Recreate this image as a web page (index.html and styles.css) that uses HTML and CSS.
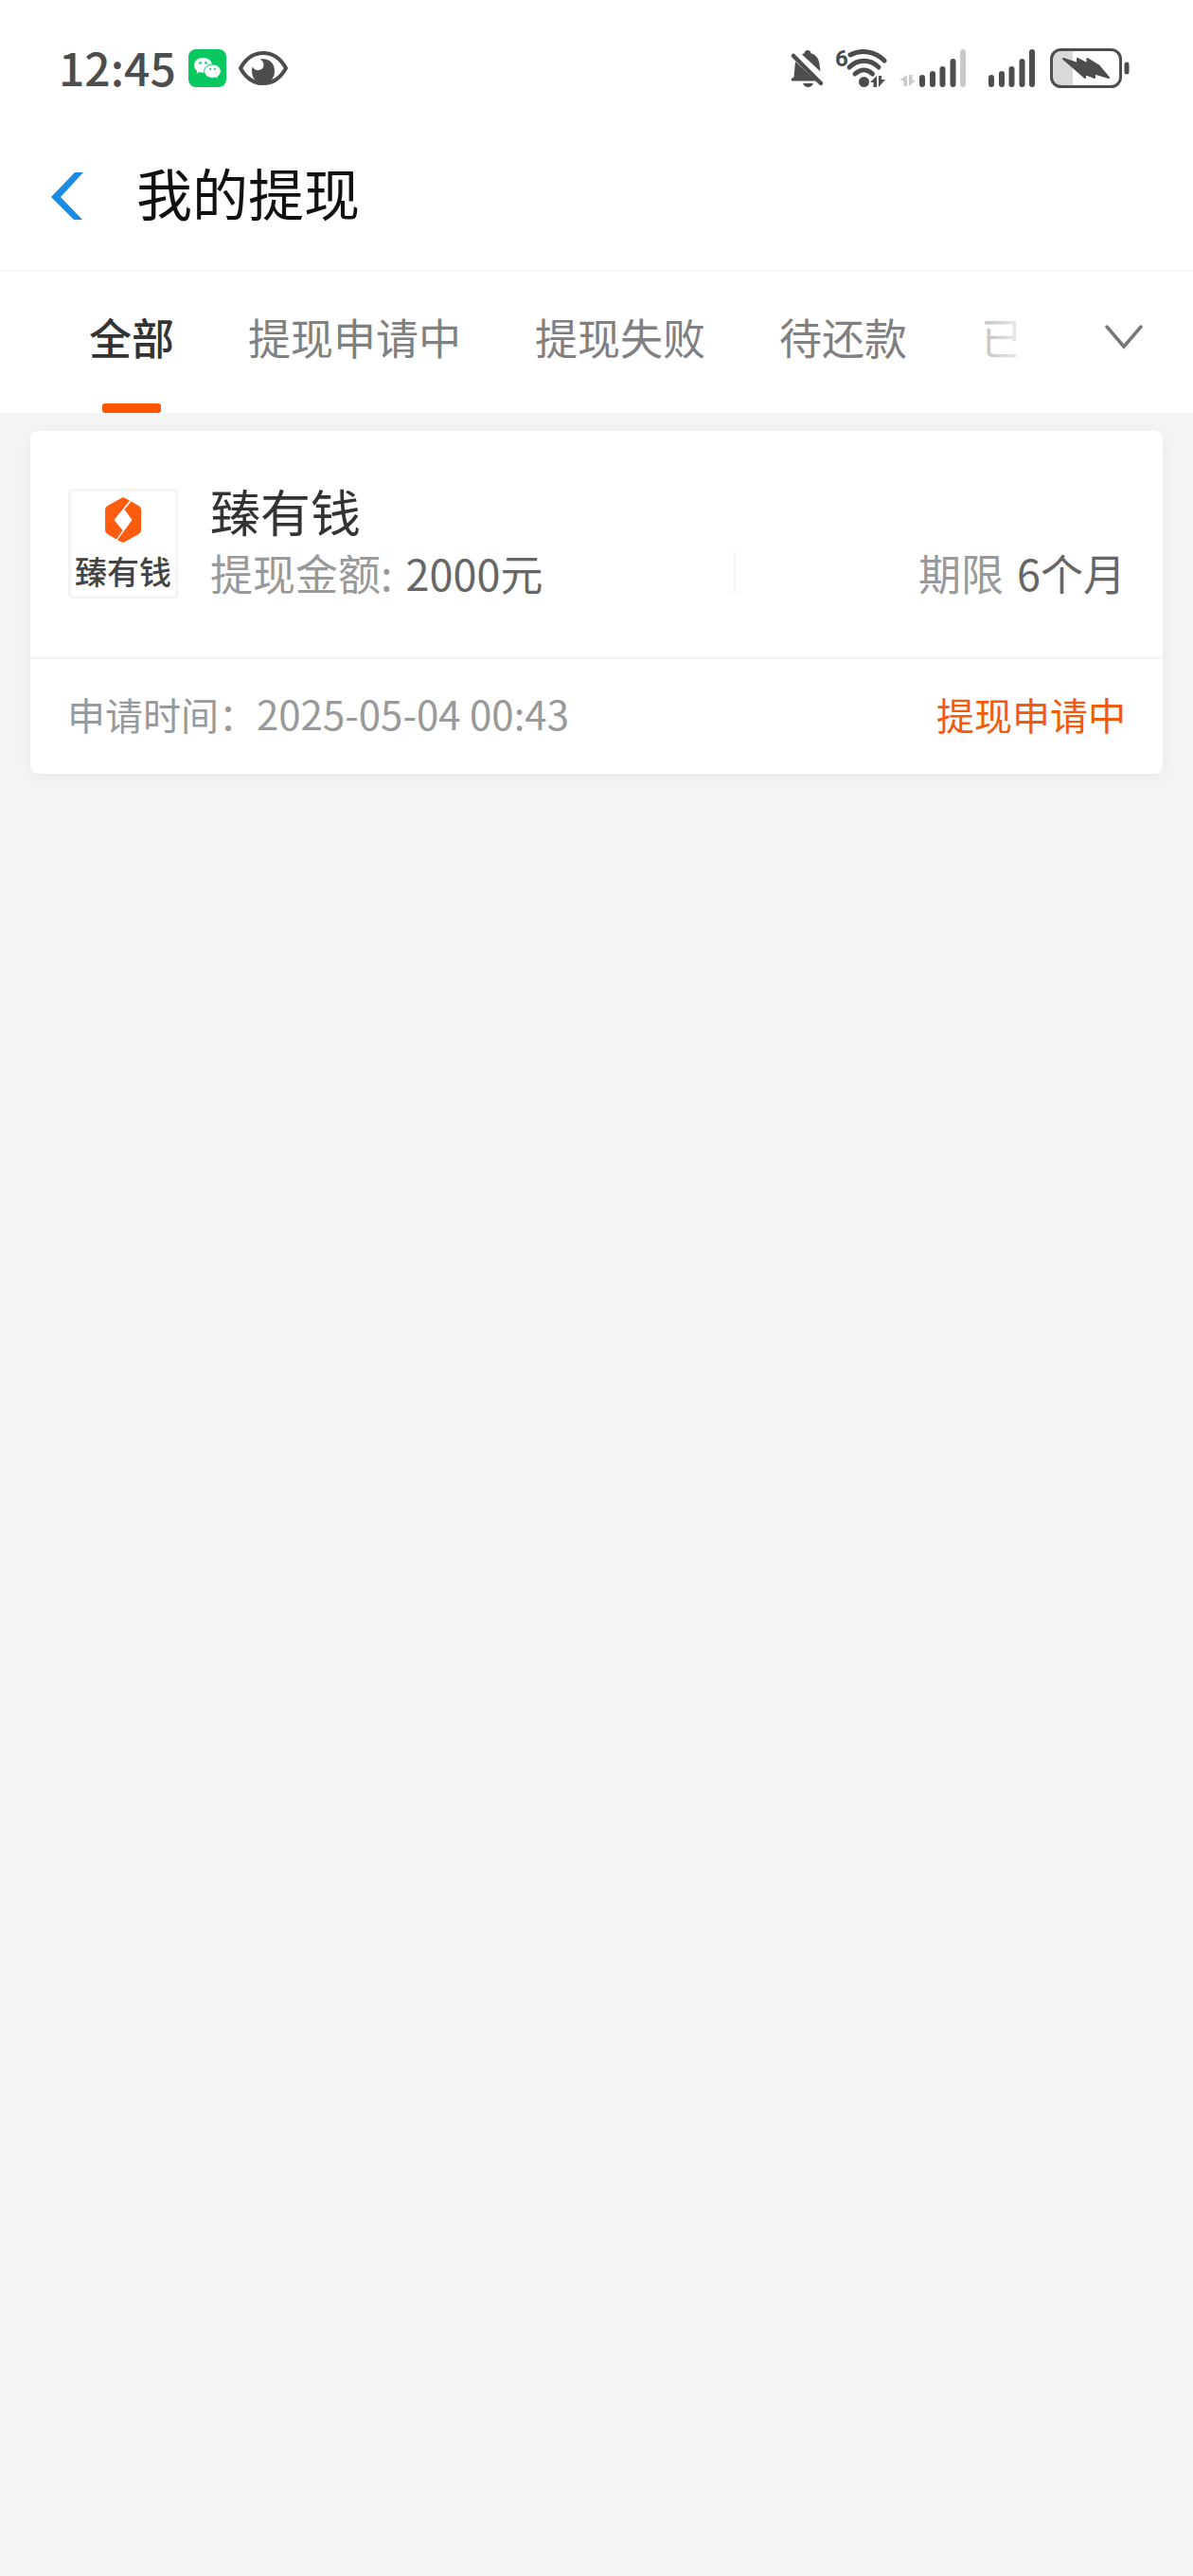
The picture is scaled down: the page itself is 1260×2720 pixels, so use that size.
FILE: index.html
```
<!DOCTYPE html>
<html lang="zh-CN">
<head>
    <meta charset="UTF-8">
    <meta name="viewport" content="width=device-width, initial-scale=1.0">
    <title>我的提现</title>
    <link rel="stylesheet" href="styles.css">
</head>
<body>
    <div class="status-bar">
        <div class="status-left">
            <span class="clock">12:45</span>
            <svg width="40" height="40" viewBox="0 0 40 40">
                <rect width="40" height="40" rx="8" fill="#07c95f"/>
                <path d="M15.500 9C10 9 6 12.500 6 17c0 2.500 1.200 4.500 3.300 6l-.8 2.800 3.300-1.700c1.200.4 2.400.6 3.700.6C21 24.700 25 21.500 25 17S21 9 15.500 9z" fill="#fff"/>
                <path d="M25.500 16c-5 0-8.800 3.200-8.800 7.200s3.800 7.200 8.800 7.200c1.100 0 2.200-.2 3.200-.5l2.800 1.500-.7-2.500c2.200-1.400 3.500-3.400 3.500-5.700 0-4-3.800-7.200-8.800-7.200z" fill="#fff" stroke="#07c95f"/>
                <g fill="#07c95f">
                    <circle cx="12.500" cy="14.500" r="1.300"/>
                    <circle cx="18.500" cy="14.500" r="1.300"/>
                    <circle cx="23" cy="21" r="1"/>
                    <circle cx="28" cy="21" r="1"/>
                </g>
            </svg>
            <svg width="52" height="36" viewBox="0 0 52 36">
                <path d="M2 18C7 9 15 2 26 2s19 7 24 16c-5 9-13 16-24 16S7 27 2 18z" fill="none" stroke="#4d4d4d" stroke-width="4" stroke-linejoin="round"/>
                <path d="M22.500 8.600C31 6.500 38 12 38 20.500 38 28 34 34 26 34s-12-6-12-13.500c0-1.500.2-2.800.6-4 2 5 11 5 11.800-1 .4-3-1-5.600-3.900-6.900z" fill="#4d4d4d"/>
            </svg>
        </div>
        <div class="status-right">
            <svg width="34" height="40" viewBox="0 0 34 40">
                <g fill="#4d4d4d">
                    <path d="M12 5.500c1-.7 1.700-1 2.500-1.300C15 2 16.200 1 18 1s3 1 3.500 3.200C27 6 30 10 30.500 16l1 7.500z"/>
                    <path d="M5 13l22 20.500H1c-.8-2 0-3.200 2.500-4z"/>
                    <path d="M13 36h11c-1 2.800-3 4-5.500 4S14 38.800 13 36z"/>
                </g>
                <path d="M3 7l29 29" stroke="#4d4d4d" stroke-width="4.500" stroke-linecap="round"/>
            </svg>
            <svg width="55" height="42" viewBox="0 0 55 42">
                <text class="wifi-gen" x="0" y="19">6</text>
                <g fill="none" stroke="#4d4d4d" stroke-width="5" stroke-linecap="round">
                    <path d="M16 7c12-6 26-4 36 6"/>
                    <path d="M15 20c9-9 22-9 31 0"/>
                    <path d="M21 27c6-5.500 13-5.500 18.500 0"/>
                </g>
                <circle cx="30.500" cy="35.500" r="5.500" fill="#4d4d4d"/>
                <path d="M44 29v12h-3.500v-5H37zM46 41V29h3v4h4z" fill="#4d4d4d"/>
            </svg>
            <svg width="70" height="40" viewBox="0 0 70 40">
                <path d="M8 27v12H4.500v-6H0zM10 39V27h3.500v6H17z" fill="#c9c9c9"/>
                <g stroke="#4d4d4d" stroke-width="6" stroke-linecap="round">
                    <path d="M24 30v7M35 26v11M45.500 21v16M56.500 13v24"/>
                    <path d="M67 3v34" stroke="#c9c9c9"/>
                </g>
            </svg>
            <svg width="60" height="40" viewBox="0 0 60 40">
                <path d="M14 30v7M25 26v11M35.500 21v16M46.500 13v24M57 3v34" stroke="#4d4d4d" stroke-width="6" stroke-linecap="round"/>
            </svg>
            <svg width="87" height="42" viewBox="0 0 87 42">
                <path d="M15 2h12v38H15A11 11 0 0 1 4 29V13A11 11 0 0 1 15 2z" fill="#d9d9d9"/>
                <rect x="4.500" y="1.500" width="73" height="39" rx="10" fill="none" stroke="#4d4d4d" stroke-width="3"/>
                <path d="M17 11l15 5v-5l10.500 5.500V11L54 18l11 13-15-4.500v4.500l-10-4v4z" fill="#4d4d4d" stroke="#4d4d4d" stroke-width="2" stroke-linejoin="round"/>
                <path d="M84 17v8" stroke="#4d4d4d" stroke-width="5" stroke-linecap="round"/>
            </svg>
        </div>
    </div>

    <header class="header">
        <button class="back-btn" aria-label="返回">
            <svg width="34" height="50" viewBox="0 0 34 50">
                <path d="M25 0h9L10 26l23 24h-9L0 26z" fill="#1b8ce3"/>
            </svg>
        </button>
        <h1>我的提现</h1>
    </header>

    <div class="tab-bar">
        <nav class="tabs">
            <button class="tab active">全部</button>
            <button class="tab">提现申请中</button>
            <button class="tab">提现失败</button>
            <button class="tab">待还款</button>
            <button class="tab">已</button>
        </nav>
        <button class="expand-btn" aria-label="展开">
            <svg width="40" height="26" viewBox="0 0 40 26">
                <path d="M2 2l18 21L38 2" fill="none" stroke="#777" stroke-width="3.500" stroke-linecap="round"/>
            </svg>
        </button>
    </div>

    <main class="container">
        <div class="card">
            <div class="card-body">
                <div class="logo">
                    <svg width="38" height="48" viewBox="0 0 38 48">
                        <path d="M19 0l7 3.500L9.500 24l9 11L12 44.500 2.500 39Q0 37.500 0 35V13q0-2.500 2.500-4z" fill="#ff5c0f"/>
                        <path d="M27.500 4.500L35.500 9Q38 10.500 38 13v22q0 2.500-2.500 4L19 48l-6-2.800L28.500 24l-8-11z" fill="#ff5c0f"/>
                    </svg>
                    <span>臻有钱</span>
                </div>
                <div class="info">
                    <h2>臻有钱</h2>
                    <div class="details">
                        <div class="amount">提现金额: <b>2000元</b></div>
                        <div class="term">期限 <b>6个月</b></div>
                    </div>
                </div>
            </div>
            <div class="card-footer">
                <span>申请时间：<time datetime="2025-05-04T00:43">2025-05-04 00:43</time></span>
                <span class="status-pending">提现申请中</span>
            </div>
        </div>
    </main>
</body>
</html>
```
FILE: styles.css
```
* {
    margin: 0;
    padding: 0;
    box-sizing: border-box;
}

body {
    font-family: 'Noto Sans CJK SC', sans-serif;
    background: #f5f5f5;
    color: #333;
}

button {
    background: none;
    border: none;
    font-family: inherit;
    cursor: pointer;
}

svg {
    display: block;
    flex: none;
}

.status-bar {
    display: flex;
    justify-content: space-between;
    align-items: center;
    height: 125px;
    padding: 19px 67px 0 62px;
    background: #fff;
}

.status-left,
.status-right {
    display: flex;
    align-items: center;
    gap: 13px;
}

.clock {
    padding-bottom: 4px;
    font-size: 48px;
    line-height: 60px;
    font-weight: 500;
    color: #4d4d4d;
}

.wifi-gen {
    font-family: Roboto, sans-serif;
    font-size: 24px;
    font-weight: 700;
    fill: #4d4d4d;
}

.header {
    display: flex;
    align-items: center;
    gap: 56px;
    height: 162px;
    padding: 4px 54px 0;
    background: #fff;
    border-bottom: 2px solid #f7f7f7;
}

.header h1 {
    padding-bottom: 8px;
    font-size: 59px;
    line-height: 80px;
    font-weight: 400;
    color: #111;
}

.tab-bar {
    display: flex;
    height: 149px;
    background: #fff;
}

.tabs {
    position: relative;
    display: flex;
    flex: 1;
    gap: 78px;
    min-width: 0;
    padding-left: 94px;
    overflow: hidden;
}

/* fades the last tab out at the edge */
.tabs::after {
    content: "";
    position: absolute;
    top: 0;
    right: 0;
    bottom: 0;
    width: 100px;
    background: linear-gradient(to right, rgba(255,255,255,0), rgba(255,255,255,0.8));
}

.tab {
    position: relative;
    flex: none;
    padding-bottom: 12px;
    font-size: 45px;
    line-height: 60px;
    color: #808080;
}

.tab.active {
    font-weight: 500;
    color: #333;
}

.tab.active::after {
    content: "";
    position: absolute;
    left: 50%;
    bottom: 0;
    width: 62px;
    height: 10px;
    margin-left: -31px;
    border-radius: 3px;
    background: #ff5500;
}

.expand-btn {
    display: flex;
    align-items: center;
    justify-content: flex-end;
    width: 187px;
    padding: 0 53px 12px 0;
}

.container {
    padding: 19px 32px;
}

.card {
    background: #fff;
    border-radius: 8px;
    box-shadow: 0 4px 20px rgba(0,0,0,0.06);
}

.card-body {
    display: flex;
    align-items: center;
    gap: 34px;
    height: 241px;
    padding: 0 39px 0 40px;
    border-bottom: 3px solid #f5f5f5;
}

.logo {
    display: flex;
    flex-direction: column;
    align-items: center;
    justify-content: center;
    gap: 10px;
    width: 116px;
    height: 116px;
    border: 3px solid #f4f4f4;
    border-radius: 4px;
    font-size: 34px;
    line-height: 40px;
    font-weight: 500;
    color: #444;
}

.info {
    flex: 1;
    padding-bottom: 10px;
}

.info h2 {
    font-size: 53px;
    line-height: 72px;
    font-weight: 400;
}

.details {
    display: flex;
    align-items: center;
    font-size: 45px;
    line-height: 60px;
    color: #999;
}

.details b {
    margin-left: 4px;
    font-weight: 400;
    color: #666;
}

.amount {
    flex: 4;
}

.term {
    flex: 3;
    text-align: right;
    background: linear-gradient(#f5f5f5, #f5f5f5) left center / 2px 46px no-repeat;
}

.card-footer {
    display: flex;
    justify-content: space-between;
    align-items: center;
    height: 121px;
    padding: 0 39px 6px;
    font-size: 40px;
    line-height: 60px;
    color: #999;
}

.card-footer time {
    font-size: 42px;
}

.status-pending {
    color: #f55a0a;
}
```
